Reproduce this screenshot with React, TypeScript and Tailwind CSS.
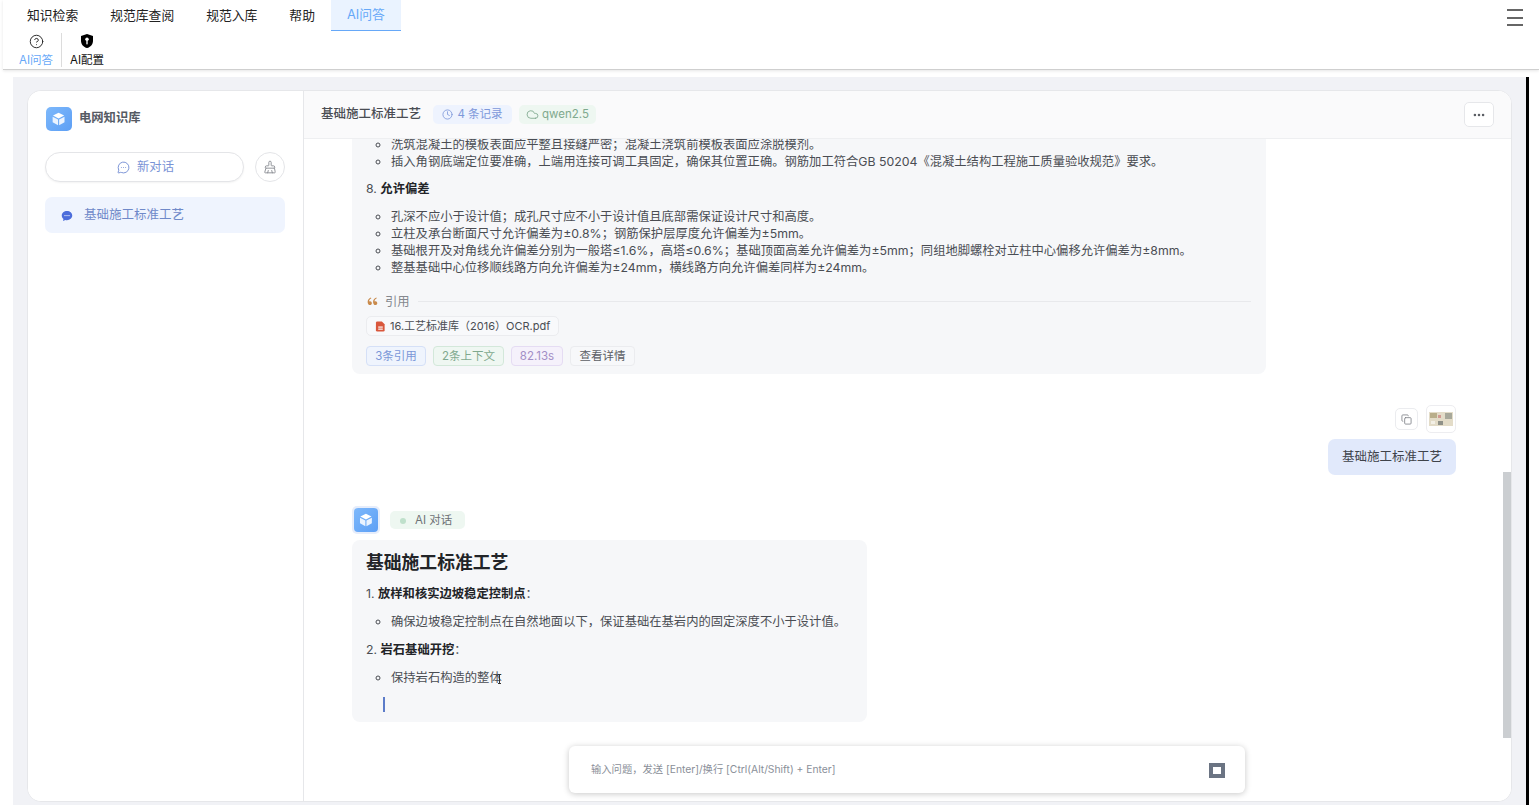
import { CircleHelp, Clock, Cloud, Copy, Ellipsis, MessageCircleMore, BrushCleaning } from "lucide-react"
import { RiDoubleQuotesL } from "react-icons/ri"

const tabs = ["知识检索", "规范库查阅", "规范入库", "帮助"]

function CubeLogo({ className }: { className: string }) {
  return (
    <div className={`flex items-center justify-center bg-gradient-to-br from-[#7db8fb] to-[#5d9ff5] ${className}`}>
      <svg viewBox="0 0 24 24" className="w-[66%] h-[66%]">
        <path d="M12 2.5 20.5 7 12 11.5 3.5 7Z" fill="#ffffff" />
        <path d="M3 8.6 11.2 13v8.6L3 17.2Z" fill="#eaf3ff" />
        <path d="M21 8.6 12.8 13v8.6l8.2-4.4Z" fill="#eaf3ff" />
      </svg>
    </div>
  )
}

function ShieldKey() {
  return (
    <svg viewBox="0 0 24 24" className="w-[16px] h-[16px]">
      <path d="M12 1.5 21 4.5v7c0 5.500-3.800 9.500-9 11-5.200-1.500-9-5.500-9-11v-7Z" fill="#000000" />
      <circle cx="12" cy="9.500" r="2.600" fill="#ffffff" />
      <rect x="11" y="11" width="2" height="6" fill="#ffffff" />
    </svg>
  )
}

function Sidebar() {
  return (
    <aside className="w-[276px] shrink-0 border-r border-[#e6e7ea] bg-white pl-[17px] pr-[18px]">
      <div className="flex items-center gap-[7px] h-[23px] mt-[16px] ml-[1px]">
        <CubeLogo className="w-[26px] h-[24px] rounded-[5px]" />
        <span className="text-[12.300px] font-semibold text-[#555a63]">电网知识库</span>
      </div>
      <div className="flex items-center gap-[11px] mt-[22px]">
        <button className="flex-1 h-[30px] pl-[2px] rounded-full border border-[#e4e5e8] bg-white shadow-[0_1px_2px_rgba(0,0,0,0.05)] flex items-center justify-center gap-[7px] text-[12.300px] text-[#7a93d6]">
          <MessageCircleMore className="w-[13px] h-[13px]" strokeWidth={1.8} />
          新对话
        </button>
        <button className="w-[30px] h-[30px] rounded-full border border-[#e4e5e8] bg-white flex items-center justify-center text-[#8a8d93]">
          <BrushCleaning className="w-[14px] h-[14px]" strokeWidth={1.6} />
        </button>
      </div>
      <div className="mt-[15px] h-[36px] pt-[1px] rounded-[7px] bg-[#eff4fe] flex items-center pl-[16px] gap-[11px] text-[12.500px] text-[#6f89c9]">
        <svg viewBox="0 0 24 24" className="w-[12px] h-[12px]">
          <path d="M12 2C6.200 2 1.500 6.100 1.500 11.200c0 2.700 1.300 5.100 3.400 6.800L4 22l4.800-2c1 .3 2.100.4 3.200.4 5.800 0 10.500-4.100 10.500-9.200S17.800 2 12 2Z" fill="#4c6ddb" />
          <circle cx="8" cy="11.200" r="1.300" fill="#ffffff" />
          <circle cx="12" cy="11.200" r="1.300" fill="#ffffff" />
          <circle cx="16" cy="11.200" r="1.300" fill="#ffffff" />
        </svg>
        基础施工标准工艺
      </div>
    </aside>
  )
}

function FirstAnswer() {
  return (
    <div className="w-[914px] rounded-b-[8px] bg-[#f6f7f9] px-[14px] pb-[8px] text-[12.300px] leading-[17px] text-[#4a4d53]">
      <ul className="list-[circle] pl-[25px]">
        <li>洗筑混凝土的模板表面应平整且接缝严密；混凝土浇筑前模板表面应涂脱模剂。</li>
        <li>插入角钢底端定位要准确，上端用连接可调工具固定，确保其位置正确。钢筋加工符合GB 50204《混凝土结构工程施工质量验收规范》要求。</li>
      </ul>
      <p className="mt-[10px]">
        8. <strong className="font-bold text-[#222428]">允许偏差</strong>
      </p>
      <ul className="list-[circle] pl-[25px] mt-[11px]">
        <li>孔深不应小于设计值；成孔尺寸应不小于设计值且底部需保证设计尺寸和高度。</li>
        <li>立柱及承台断面尺寸允许偏差为±0.8%；钢筋保护层厚度允许偏差为±5mm。</li>
        <li>基础根开及对角线允许偏差分别为一般塔≤1.6%，高塔≤0.6%；基础顶面高差允许偏差为±5mm；同组地脚螺栓对立柱中心偏移允许偏差为±8mm。</li>
        <li>整基基础中心位移顺线路方向允许偏差为±24mm，横线路方向允许偏差同样为±24mm。</li>
      </ul>
      <div className="flex items-center mt-[17px] mr-[1px] h-[17px]">
        <RiDoubleQuotesL className="w-[13px] h-[13px] text-[#c98a4b]" />
        <span className="ml-[6px] text-[#85888e] text-[12.300px]">引用</span>
        <div className="ml-[8px] flex-1 h-px bg-[#e8e9ec]" />
      </div>
      <div className="mt-[6px] inline-flex items-center gap-[4px] h-[20px] px-[8px] rounded-[5px] border border-[#ebecef] bg-[#f8f9fb] text-[11px] text-[#4a4d53]">
        <svg viewBox="0 0 24 24" className="w-[11px] h-[11px]">
          <path d="M5 1h10l6 6v13a3 3 0 0 1-3 3H5a3 3 0 0 1-3-3V4a3 3 0 0 1 3-3Z" fill="#d9573c" />
          <rect x="7" y="12" width="10" height="2.500" fill="#ffffff" />
          <rect x="7" y="16.500" width="10" height="2.500" fill="#ffffff" />
        </svg>
        16.工艺标准库（2016）OCR.pdf
      </div>
      <div className="mt-[10px] flex gap-[7px] text-[11.500px]">
        <span className="h-[20px] w-[60px] flex items-center justify-center rounded-[4px] border border-[#d5e0f7] bg-[#eff4fd] text-[#7b97d8]">3条引用</span>
        <span className="h-[20px] w-[71px] flex items-center justify-center rounded-[4px] border border-[#d3e8da] bg-[#eff7f2] text-[#7fa98e]">2条上下文</span>
        <span className="h-[20px] w-[52px] flex items-center justify-center rounded-[4px] border border-[#e5dcf3] bg-[#f5f1fb] text-[#a28ec6]">82.13s</span>
        <span className="h-[20px] w-[65px] flex items-center justify-center rounded-[4px] border border-[#ebecef] bg-[#f7f8fa] text-[#5c5f65]">查看详情</span>
      </div>
    </div>
  )
}

function UserMessage() {
  return (
    <div className="flex flex-col items-end mt-[31px]">
      <div className="flex items-center gap-[8px]">
        <button className="w-[23px] h-[22px] rounded-[5px] border border-[#ebecef] bg-white flex items-center justify-center text-[#7d8086]">
          <Copy className="w-[11px] h-[11px]" strokeWidth={1.8} />
        </button>
        <div className="w-[30px] h-[28px] rounded-[5px] border border-[#ededf0] bg-white flex items-center justify-center">
          <svg viewBox="0 0 24 14" className="w-[24px] h-[14px]">
            <rect width="24" height="14" fill="#e3dcc8" />
            <rect x="1" y="1" width="7" height="5" fill="#b9ae8a" />
            <rect x="16" y="1" width="7" height="6" fill="#a7a89a" />
            <rect x="9" y="3" width="3" height="3" fill="#d39a92" />
            <rect x="9" y="9" width="5" height="4" fill="#8f9188" />
            <rect x="2" y="9" width="4" height="3" fill="#f3f0e6" />
          </svg>
        </div>
      </div>
      <div className="mt-[6px] w-[128px] h-[36px] rounded-[7px] bg-[#e1e9fb] flex items-center justify-center text-[12.500px] text-[#3f434a]">
        基础施工标准工艺
      </div>
    </div>
  )
}

function SecondAnswer() {
  return (
    <div className="mt-[31px]">
      <div className="flex items-center gap-[10px]">
        <div className="w-[28px] h-[28px] rounded-[5px] bg-[#e6edfb] flex items-center justify-center">
          <CubeLogo className="w-[24px] h-[24px] rounded-[4px]" />
        </div>
        <div className="w-[75px] h-[18px] pt-[1px] rounded-[5px] bg-[#eef7f1] flex items-center pl-[10px] gap-[9px] text-[11.500px] text-[#6e7277]">
          <span className="w-[6px] h-[6px] rounded-full bg-[#bfe0cb]" />
          AI 对话
        </div>
      </div>
      <div className="relative mt-[6px] w-[515px] h-[182px] rounded-[8px] bg-[#f6f7f9] px-[14px] pt-[10px] text-[12.300px] leading-[17px] text-[#4a4d53]">
        <h2 className="text-[17.800px] leading-[26px] font-bold text-[#222428]">基础施工标准工艺</h2>
        <p className="mt-[9px]">
          1. <strong className="font-bold text-[#222428]">放样和核实边坡稳定控制点</strong>：
        </p>
        <ul className="list-[circle] pl-[25px] mt-[11px]">
          <li>确保边坡稳定控制点在自然地面以下，保证基础在基岩内的固定深度不小于设计值。</li>
        </ul>
        <p className="mt-[11px]">
          2. <strong className="font-bold text-[#222428]">岩石基础开挖</strong>：
        </p>
        <ul className="list-[circle] pl-[25px] mt-[11px]">
          <li>保持岩石构造的整体</li>
        </ul>
        <div className="ml-[17px] mt-[11px] w-[2px] h-[15px] bg-[#5c7cc9]" />
        <span className="absolute left-[146px] top-[134px] w-[3px] h-[10px] border-y border-[#333] before:absolute before:left-[1px] before:top-0 before:h-full before:w-px before:bg-[#333]" />
      </div>
    </div>
  )
}

function ChatPanel() {
  return (
    <section className="flex-1 min-w-0 flex flex-col bg-white">
      <div className="h-[48px] shrink-0 border-b border-[#eeeff1] bg-[#fafafb] flex items-center pl-[17px] pr-[17px]">
        <span className="text-[12.500px] font-medium text-[#4a4d53]">基础施工标准工艺</span>
        <div className="ml-[12px] w-[79px] h-[19px] rounded-[5px] bg-[#eef3fe] flex items-center justify-center gap-[4px] text-[11.500px] text-[#7d98da]">
          <Clock className="w-[11px] h-[11px]" strokeWidth={1.8} />4 条记录
        </div>
        <div className="ml-[7px] w-[77px] h-[19px] rounded-[5px] bg-[#eef7f1] flex items-center justify-center gap-[3px] text-[11.500px] text-[#7fa98e]">
          <Cloud className="w-[13px] h-[13px]" strokeWidth={1.6} />qwen2.5
        </div>
        <button className="ml-auto w-[30px] h-[25px] rounded-[5px] border border-[#e6e7ea] bg-white flex items-center justify-center text-[#5c5f65]">
          <Ellipsis className="w-[14px] h-[14px]" strokeWidth={2.4} />
        </button>
      </div>
      <div className="relative flex-1 min-h-0 overflow-hidden flex flex-col justify-end pl-[48px] pr-[55px] pb-[79px]">
        <FirstAnswer />
        <UserMessage />
        <SecondAnswer />
        <div className="absolute right-0 bottom-[63px] w-[8px] h-[266px] bg-[#cbced1]" />
        <div className="absolute left-[265px] bottom-[8px] w-[676px] h-[47px] pt-[1px] rounded-[6px] bg-white shadow-[0_1px_6px_rgba(0,0,0,0.22)] flex items-center justify-between pl-[22px] pr-[20px] text-[10.300px] text-[#8a8f99]">
          输入问题，发送 [Enter]/换行 [Ctrl(Alt/Shift) + Enter]
          <span className="w-[16px] h-[15px] border-[4px] border-[#6b7483] bg-white" />
        </div>
      </div>
    </section>
  )
}

export default function App() {
  return (
    <div className="h-screen overflow-hidden bg-white flex flex-col font-['Inter','Noto_Sans_CJK_SC',sans-serif]">
      <header className="h-[70px] shrink-0 ml-[3px] border-b border-[#cfcfcf] shadow-[0_1px_3px_rgba(0,0,0,0.1)] relative">
        <nav className="flex h-[31px] pl-[8px]">
          {tabs.map((t) => (
            <button key={t} className="px-[16px] text-[12.800px] text-[#222]">
              {t}
            </button>
          ))}
          <button className="w-[70px] bg-[#eaf3ff] border-b border-[#66a8f8] text-[12.800px] text-[#66a8f8]">AI问答</button>
        </nav>
        <div className="flex h-[38px] pl-[16px]">
          <div className="flex flex-col items-center w-[34px] pt-[3px] text-[11.500px] leading-[14px] text-[#66a8f8]">
            <CircleHelp className="w-[15px] h-[15px] mb-[4px] text-[#222]" strokeWidth={1.5} />
            <span className="whitespace-nowrap">AI问答</span>
          </div>
          <div className="ml-[8px] mt-[2px] w-px h-[34px] bg-[#dcdcdc]" />
          <div className="ml-[8px] flex flex-col items-center w-[34px] pt-[2px] text-[11.500px] leading-[14px] text-[#111]">
            <span className="h-[20px]">
              <ShieldKey />
            </span>
            <span className="whitespace-nowrap">AI配置</span>
          </div>
        </div>
        <button className="absolute right-[16px] top-[9px] w-[16px] h-[17px] flex flex-col justify-between">
          <span className="block w-full h-[2px] bg-[#666]" />
          <span className="block w-full h-[2px] bg-[#666]" />
          <span className="block w-full h-[2px] bg-[#666]" />
        </button>
      </header>
      <div className="flex-1 min-h-0 pt-[7px] pl-[13px]">
        <div className="w-[1516px] h-full border-r-[3px] border-black bg-[#f1f2f6] pt-[13px] pl-[14px] pr-[14px] pb-[3px]">
          <div className="h-full flex rounded-[14px] border border-[#e6e7ea] overflow-hidden bg-white">
            <Sidebar />
            <ChatPanel />
          </div>
        </div>
      </div>
    </div>
  )
}
